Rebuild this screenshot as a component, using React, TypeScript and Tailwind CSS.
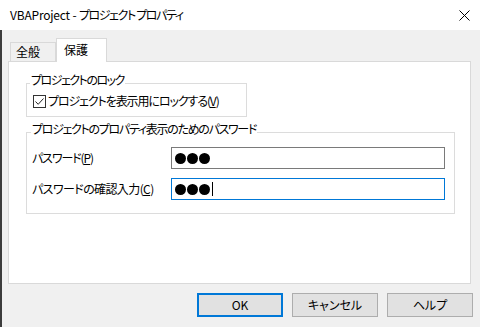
import React from "react";

const font = { fontFamily: '"Noto Sans CJK JP", "Noto Sans", sans-serif' };

function Dots({ caret }: { caret?: boolean }) {
  return (
    <div className="flex items-center gap-[1px] pl-[3px]">
      <span className="w-[11px] h-[11px] rounded-full bg-black" />
      <span className="w-[11px] h-[11px] rounded-full bg-black" />
      <span className="w-[11px] h-[11px] rounded-full bg-black" />
      {caret && <span className="w-[1px] h-[14px] bg-black ml-[1px]" />}
    </div>
  );
}

export default function App() {
  return (
    <div
      className="w-[480px] h-[327px] flex flex-col bg-white text-black text-[12px] leading-[16px] [font-feature-settings:'palt'] overflow-hidden"
      style={font}
    >
      {/* Title bar */}
      <div className="h-[30px] flex items-center justify-between pl-[10px] pr-[10px] bg-white">
        <span className="text-[12px]">
          <span className="tracking-[-0.2px]">VBAProject - </span>
          <span className="tracking-[-1.4px]">プロジェクト プロパティ</span>
        </span>
        <svg width="11" height="11" viewBox="0 0 11 11">
          <path d="M0.5 0.5 L10.5 10.5 M10.5 0.5 L0.5 10.5" stroke="#000" strokeWidth="1" />
        </svg>
      </div>

      {/* Body */}
      <div className="flex-1 flex flex-col bg-[#f0f0f0] border-l-2 border-[#3c3c3c] pl-[6px] pr-[7px] pt-[8px]">
        {/* Tabs */}
        <div className="h-[23px] flex items-end pl-[2px] mr-[2px]">
          <div className="h-[19px] w-[46px] border border-b-0 border-[#d9d9d9] bg-[#f0f0f0] flex items-center pl-[5px]">
            全般
          </div>
          <div className="relative z-10 h-[24px] w-[51px] -mb-[1px] border border-b-0 border-[#d9d9d9] bg-white flex items-start pt-[3px] pl-[7px]">
            保護
          </div>
        </div>

        {/* Panel */}
        <div className="h-[223px] mr-[2px] border border-[#d9d9d9] bg-white flex flex-col pl-[17px] tracking-[-1.1px]">
          {/* Group 1 */}
          <div className="relative mt-[21px] w-[221px] h-[34px] border border-[#dcdcdc] pt-[9px] pl-[6px]">
            <span className="absolute -top-[12px] left-[3px] px-[1px] bg-white tracking-[-1.5px]">
              プロジェクトのロック
            </span>
            <div className="flex items-center h-[16px]">
              <span className="w-[13px] h-[13px] border border-[#333333] bg-white flex items-center justify-center">
                <svg width="11" height="11" viewBox="0 0 11 11">
                  <path d="M1.5 5.5 L4.2 8.3 L9.5 2.5" fill="none" stroke="#222" strokeWidth="1" />
                </svg>
              </span>
              <span className="ml-[2px]">
                プロジェクトを表示用にロックする(<span className="underline">V</span>)
              </span>
            </div>
          </div>

          {/* Group 2 */}
          <div className="relative mt-[15px] w-[429px] h-[82px] border border-[#dcdcdc] pt-[14px] pl-[5px] pr-[9px]">
            <span className="absolute -top-[12px] left-[4px] px-[1px] bg-white tracking-[-1.3px]">
              プロジェクトのプロパティ表示のためのパスワード
            </span>
            <div className="flex items-center h-[22px]">
              <span className="w-[139px]">
                パスワード(<span className="underline">P</span>)
              </span>
              <div className="flex-1 h-[22px] border border-[#7a7a7a] bg-white flex items-center">
                <Dots />
              </div>
            </div>
            <div className="flex items-center h-[22px] mt-[9px]">
              <span className="w-[139px] tracking-[-0.6px]">
                パスワードの確認入力(<span className="underline">C</span>)
              </span>
              <div className="flex-1 h-[22px] border border-[#0078d7] bg-white flex items-center">
                <Dots caret />
              </div>
            </div>
          </div>
        </div>

        {/* Buttons */}
        <div className="mt-[9px] flex justify-end gap-[9px]">
          <button className="w-[86px] h-[24px] border-2 border-[#0078d7] bg-[#e1e1e1] flex items-center justify-center">
            OK
          </button>
          <button className="w-[86px] h-[24px] border border-[#adadad] bg-[#e1e1e1] flex items-center justify-center">
            キャンセル
          </button>
          <button className="w-[86px] h-[24px] border border-[#adadad] bg-[#e1e1e1] flex items-center justify-center">
            ヘルプ
          </button>
        </div>
      </div>
    </div>
  );
}
